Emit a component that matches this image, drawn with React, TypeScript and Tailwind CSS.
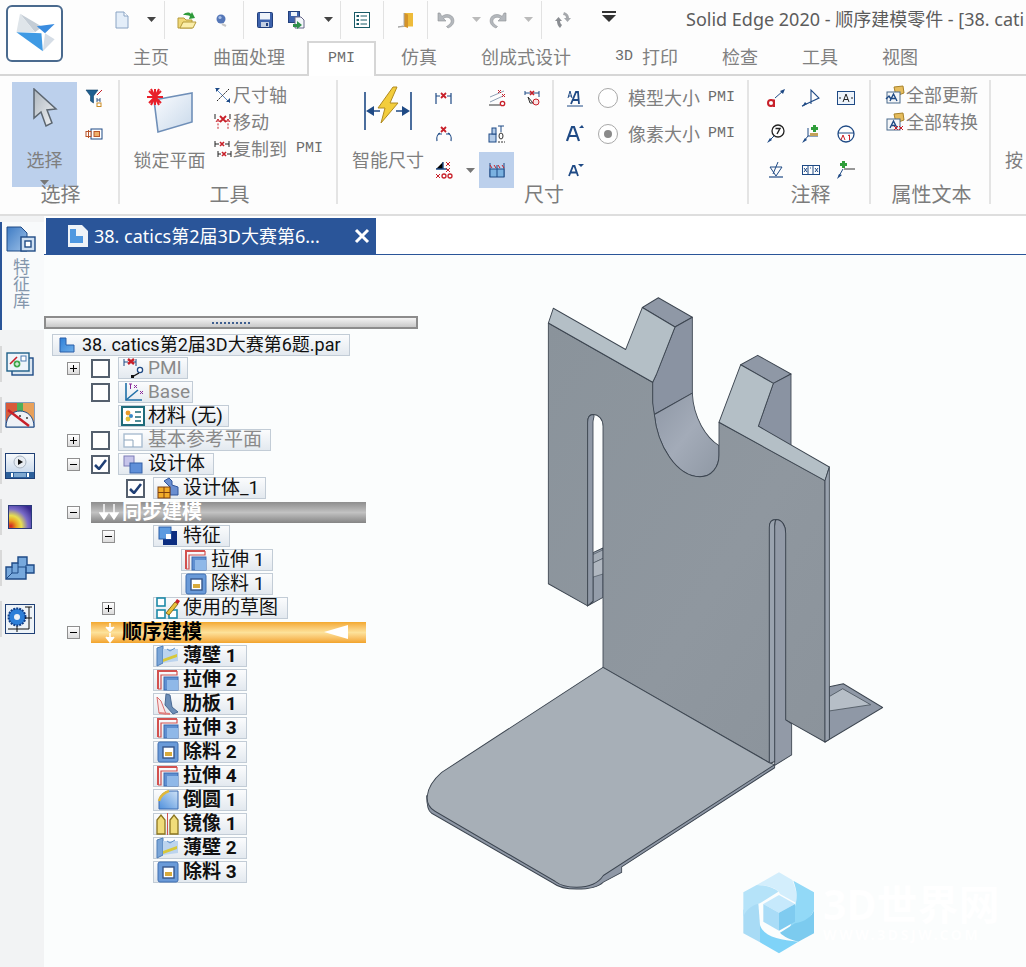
import React from "react";

type P = { children?: React.ReactNode };
const S = ({ w = 22, h = 22, vb, children, className }: { w?: number; h?: number; vb?: string; children?: React.ReactNode; className?: string }) => (
  <svg width={w} height={h} viewBox={vb ?? `0 0 ${w} ${h}`} className={"shrink-0 " + (className ?? "")}>
    {children}
  </svg>
);
const NAVY = "#1f4a85";
const RED = "#c8202a";

const Pmi = ({ className = "" }: { className?: string }) => (
  <span className={"text-[15px] font-['Liberation_Mono',monospace] text-[#6c6c6c] " + className}>PMI</span>
);

/* ---------- quick access icons ---------- */
const QNew = () => (
  <S w={14} h={18}>
    <path d="M1 1H9L13 5V17H1Z" fill="#e4eef9" stroke="#8aa4c4" />
    <path d="M9 1V5H13" fill="#fff" stroke="#8aa4c4" />
  </S>
);
const Dd = ({ c = "#444" }: { c?: string }) => (
  <S w={9} h={5}>
    <path d="M0 0H9L4.5 5Z" fill={c} />
  </S>
);
const QOpen = () => (
  <S w={20} h={20}>
    <path d="M1 8H7L9 10H15V18H1Z" fill="#f0d878" stroke="#b59a3a" />
    <path d="M3 18L6 12H19L16 18Z" fill="#fbeeaa" stroke="#b59a3a" />
    <path d="M6 5C9 2 12 2 14 4L15 2L18 8L12 9L13 6C11 5 9 5 6 5Z" fill="#2e9a3a" />
  </S>
);
const QWeb = () => (
  <S w={12} h={14}>
    <circle cx="6" cy="6" r="4.5" fill="#5577b8" />
    <circle cx="5" cy="4.5" r="1.6" fill="#a9c0e6" />
    <path d="M7 11L11 13" stroke="#c7c7c7" strokeWidth="2" />
  </S>
);
const QSave = () => (
  <S w={16} h={16}>
    <rect x="0.5" y="0.5" width="15" height="15" rx="1" fill="#3d62ac" stroke="#22407c" />
    <rect x="3" y="1" width="10" height="6.5" fill="#eef3fa" />
    <rect x="4" y="10" width="8" height="5" fill="#c4cfe2" />
    <rect x="9" y="11" width="2" height="3" fill="#22407c" />
  </S>
);
const QSaveAs = () => (
  <S w={18} h={18}>
    <rect x="0.5" y="0.5" width="11" height="11" fill="#3d62ac" stroke="#22407c" />
    <rect x="3" y="1" width="6" height="4" fill="#eef3fa" />
    <path d="M7 6H13L16 9V17H7Z" fill="#f4f7fb" stroke="#668" />
    <path d="M5 13H9V10L14 14L9 18V16H5Z" fill="#2f8f4a" />
  </S>
);
const QProps = () => (
  <S w={16} h={16}>
    <rect x="0.5" y="0.5" width="15" height="15" fill="#fff" stroke="#175a66" />
    <rect x="2.5" y="3" width="2.5" height="2" fill="#175a66" />
    <rect x="2.5" y="7" width="2.5" height="2" fill="#175a66" />
    <rect x="2.5" y="11" width="2.5" height="2" fill="#175a66" />
    <path d="M6.5 4H13M6.5 8H13M6.5 12H13" stroke="#175a66" />
  </S>
);
const QExit = () => (
  <S w={18} h={18}>
    <path d="M1 16L6 15" stroke="#9a9a9a" />
    <rect x="7" y="2" width="9" height="13.5" fill="#eebb3a" />
    <path d="M7 2L11 3.5V17L7 15.5Z" fill="#d4942a" />
    <path d="M7 2V15.5L1 16" fill="none" stroke="#aaa" />
  </S>
);
const QUndo = ({ flip = false }: { flip?: boolean }) => (
  <S w={18} h={18} className={flip ? "-scale-x-100" : ""}>
    <path d="M1 2V10H9L6.5 7.5C9 5.5 13 6 14 9C15 12 12 14 9.5 15.5L11 17C15 15.5 18 12 16.5 7.5C15 3.5 9 2 4.8 5.5L3 2Z" fill="#b4b8bd" stroke="#8f9296" strokeWidth="0.6" />
  </S>
);
const QSwap = () => (
  <S w={16} h={18}>
    <path d="M5 17C3 15 2 13 2 10L0 10L3.5 6L7 10L5 10C5 12 6 13 7 14Z" fill="#8a8d92" />
    <path d="M9 1C12 2 14 4 14 7L16 7L12.5 11L9 7L11 7C11 5 10 4 8 4Z" fill="#a5a8ac" />
  </S>
);
const QMenu = () => (
  <S w={14} h={11}>
    <rect x="0" y="0" width="14" height="2" fill="#333" />
    <path d="M0 4H14L7 11Z" fill="#333" />
  </S>
);

/* ---------- ribbon icons ---------- */
const Cursor = () => (
  <S w={26} h={44}>
    <path d="M2 1L2 30L9 24L14 38L20 35L15 22L24 21Z" fill="url(#cur)" stroke="#5c6670" strokeWidth="1.5" />
    <defs>
      <linearGradient id="cur" x1="0" y1="0" x2="1" y2="1">
        <stop offset="0" stopColor="#aeb6be" />
        <stop offset="1" stopColor="#f2f4f6" />
      </linearGradient>
    </defs>
  </S>
);
const FilterH = () => (
  <S w={18} h={18}>
    <path d="M1 1H13L8.5 7V14L5.5 12V7Z" fill="#1f5f8f" stroke="#123f66" strokeWidth="0.6" />
    <path d="M12 6L17 1" stroke={RED} />
    <path d="M12 9V13M15 9V13M12 11H15" stroke="#3a5c88" />
    <rect x="12" y="14" width="4" height="3.5" fill="#fff" stroke="#c98a22" />
  </S>
);
const SelSmall = () => (
  <S w={18} h={12}>
    <rect x="6" y="1" width="11" height="10" fill="#fff" stroke="#1f4a85" />
    <rect x="9" y="3.5" width="5.5" height="5" fill="#eeb06a" stroke="#b9552a" />
    <rect x="1" y="3.5" width="5" height="5" fill="#fff" stroke="#b9552a" />
    <path d="M3.5 2V10" stroke="#b9552a" />
  </S>
);
const Plane = () => (
  <S w={48} h={46}>
    <path d="M8 12L46 5V34L12 44Z" fill="url(#pl)" stroke="#6f8fb8" strokeWidth="1.6" />
    <defs>
      <linearGradient id="pl" x1="0" y1="0" x2="1" y2="1">
        <stop offset="0" stopColor="#fbfdff" />
        <stop offset="1" stopColor="#c8d8ea" />
      </linearGradient>
    </defs>
    <g stroke="#e8202a" strokeWidth="2">
      <path d="M9 1V17M1 9H17M3 3L15 15M15 3L3 15M5 1L13 17M13 1L5 17" />
    </g>
  </S>
);
const DimAxis = () => (
  <S w={18} h={18}>
    <path d="M1 2L16 17" stroke="#5b87c0" />
    <path d="M3 15L15 3" stroke="#222" strokeDasharray="2 1" />
    <path d="M2 2L6 2L2 6Z" fill="#1f4a85" />
    <path d="M16 16H12L16 12Z" fill="#1f4a85" />
  </S>
);
const DimMove = () => (
  <S w={18} h={18}>
    <path d="M1 1V6M16 1V6" stroke="#222" />
    <path d="M6 3L12 9M12 3L6 9" stroke={RED} strokeWidth="1.8" />
    <path d="M4 7V17M14 7V17" stroke={RED} strokeDasharray="2 1.4" />
    <path d="M2 9L4 6L6 9M12 9L14 6L16 9" fill="none" stroke={RED} />
  </S>
);
const DimCopy = () => (
  <S w={18} h={18}>
    <path d="M1 1V7M15 1V7M4 11V17M17 11V17" stroke="#222" />
    <path d="M6 2L10 6M10 2L6 6M8 12L12 16M12 12L8 16" stroke={RED} strokeWidth="1.6" />
    <path d="M1 4H5M11 4H15M4 14H7M13 14H17" stroke="#222" />
  </S>
);
const Smart = () => (
  <S w={48} h={46}>
    <path d="M1 6V44M47 6V44" stroke={NAVY} strokeWidth="1.6" />
    <path d="M2 25L10 20V30ZM46 25L38 20V30Z" fill={NAVY} />
    <path d="M10 25H16M32 25H38" stroke={NAVY} strokeWidth="1.6" />
    <path d="M29 1L14 22H21L17 37L34 17H26L33 1Z" fill="#f3cd3c" stroke="#b08a20" />
  </S>
);
const D1 = () => (
  <S w={18} h={14}>
    <path d="M1 2V13M16 2V13" stroke={NAVY} strokeWidth="1.2" />
    <path d="M1 5H5M12 5H16" stroke={NAVY} />
    <path d="M6 2L11 7M11 2L6 7" stroke={RED} strokeWidth="1.8" />
  </S>
);
const D2 = () => (
  <S w={18} h={18}>
    <path d="M2 8L16 2" stroke="#8ea0b4" />
    <path d="M2 13L15 7" stroke="#8ea0b4" />
    <path d="M1 16H12" stroke="#333" />
    <path d="M10 1L13 4M13 1L10 4M14 5L17 8M17 5L14 8" stroke={RED} />
    <circle cx="14.5" cy="14.5" r="2.2" fill="none" stroke={RED} strokeWidth="1.3" />
  </S>
);
const D3 = () => (
  <S w={18} h={16}>
    <path d="M2 15C1 11 3 8 5 7M16 15C17 11 15 8 13 7" fill="none" stroke={NAVY} strokeWidth="1.2" />
    <path d="M3 8H7M11 8H15" stroke={NAVY} />
    <path d="M6 1L11 6M11 1L6 6" stroke={RED} strokeWidth="1.8" />
  </S>
);
const D4 = () => (
  <S w={18} h={18}>
    <rect x="1" y="9" width="7" height="8" fill="#b3cbe8" stroke={NAVY} />
    <rect x="4" y="3" width="4" height="6" fill="#b3cbe8" stroke={NAVY} />
    <path d="M10 1H16M13 1V7" stroke={NAVY} />
    <ellipse cx="13" cy="11" rx="2" ry="3" fill="none" stroke="#333" />
    <path d="M10 17H17" stroke="#333" strokeDasharray="2 1" />
  </S>
);
const D5 = () => (
  <S w={18} h={16}>
    <path d="M2 1V5M16 1V7M2 3H16" stroke={NAVY} />
    <path d="M7 1L11 5M11 1L7 5" stroke={RED} strokeWidth="1.6" />
    <path d="M5 7L10 13L7 13Z" fill="#fff" stroke="#333" />
    <circle cx="13" cy="12" r="3" fill="#fbe3e3" stroke={RED} />
  </S>
);
const D6 = () => (
  <S w={18} h={18}>
    <path d="M1 8H8V1M8 8H12" stroke={NAVY} strokeWidth="1.4" />
    <path d="M11 1L15 5M15 1L11 5M11 7L15 11M15 7L11 11" stroke={RED} />
    <path d="M1 13L5 17M5 13L1 17" stroke={RED} />
    <circle cx="9" cy="15" r="2" fill="none" stroke={RED} strokeWidth="1.3" />
    <circle cx="15" cy="15" r="2" fill="none" stroke={RED} strokeWidth="1.3" />
  </S>
);
const D7 = () => (
  <S w={18} h={18}>
    <path d="M2 2V16M16 2V16" stroke={NAVY} />
    <path d="M2 4L4 7M6 4L8 7M10 4L12 7M14 4L16 7" stroke={RED} />
    <rect x="2" y="8" width="14" height="8" fill="#7ab1e0" stroke={NAVY} />
    <path d="M9 4V16" stroke={NAVY} />
  </S>
);
const Af = ({ t }: { t: number }) => (
  <S w={18} h={18}>
    {t === 0 && (
      <>
        <path d="M2 9L4 2L6 9M2.6 7H5.4" fill="none" stroke={NAVY} strokeWidth="1" />
        <path d="M5 15L10 3H12L13 15M7 11H13" fill="none" stroke={NAVY} strokeWidth="1.8" />
        <path d="M1 17H17" stroke={NAVY} />
      </>
    )}
    {t === 1 && (
      <>
        <path d="M1 17L6 3H8L13 17M3.5 12H10.5" fill="none" stroke={NAVY} strokeWidth="2.2" />
        <path d="M13 4L16 1L18 4Z" fill={NAVY} />
      </>
    )}
    {t === 2 && (
      <>
        <path d="M3 17L7 7H8.5L12 17M5 13.5H10.5" fill="none" stroke={NAVY} strokeWidth="1.8" />
        <path d="M12 5L15 8L18 5Z" fill={NAVY} />
      </>
    )}
  </S>
);
const Tip = () => <path d="M1 19L6 16L4 14Z" fill={NAVY} />;
const N1 = () => (
  <S w={20} h={20}>
    <circle cx="5" cy="15" r="3" fill="none" stroke={RED} strokeWidth="2" />
    <path d="M8 11.5V19" stroke={RED} strokeWidth="2" />
    <path d="M9 10L17 3" stroke={NAVY} />
    <path d="M19 1L14 3L17 6Z" fill={NAVY} />
  </S>
);
const N2 = () => (
  <S w={20} h={20}>
    <path d="M1 18L18 10L10 2V16" fill="none" stroke={NAVY} strokeWidth="1.1" />
    <Tip />
  </S>
);
const N3 = () => (
  <S w={18} h={14}>
    <rect x="0.5" y="0.5" width="17" height="13" fill="#eef4fb" stroke={NAVY} />
    <path d="M6 11L9 3L12 11M7 8.5H11" fill="none" stroke="#222" />
    <path d="M2 7H4M14 7H16" stroke="#222" />
  </S>
);
const N4 = () => (
  <S w={20} h={20}>
    <circle cx="12" cy="7" r="6" fill="#fff" stroke="#222" strokeWidth="1.3" />
    <path d="M9.5 4.5H14L11 10" fill="none" stroke="#222" strokeWidth="1.4" />
    <path d="M8 12L3 17" stroke={NAVY} />
    <Tip />
  </S>
);
const N5 = () => (
  <S w={20} h={20}>
    <path d="M7 4V12H17" fill="none" stroke={NAVY} />
    <path d="M9 9H17V12H9Z" fill="#c3a15a" />
    <path d="M12 1H15V3H17V6H15V8H12V6H10V3H12Z" fill="#2f9d3a" />
    <path d="M7 12L3 17" stroke={NAVY} />
    <Tip />
  </S>
);
const N6 = () => (
  <S w={18} h={18}>
    <circle cx="9" cy="9" r="8" fill="#fff" stroke={NAVY} strokeWidth="1.3" />
    <path d="M1 8H17" stroke={NAVY} />
    <path d="M4 15L6 10L8 15M11 10.5L12.5 10V15" fill="none" stroke={RED} />
  </S>
);
const N7 = () => (
  <S w={16} h={18}>
    <path d="M2 6H14L8 15ZM10 1L5 13" fill="none" stroke={NAVY} />
    <path d="M1 16H15" stroke={NAVY} strokeWidth="1.2" />
  </S>
);
const N8 = () => (
  <S w={18} h={10}>
    <rect x="0.5" y="0.5" width="17" height="9" fill="#fff" stroke={NAVY} />
    <path d="M6 1V9M11 1V9" stroke={NAVY} />
    <path d="M2 3L5 7M5 3L2 7M8 3H9M13 3L16 7M16 3L13 7" stroke={NAVY} />
  </S>
);
const N9 = () => (
  <S w={20} h={20}>
    <path d="M7 9L3 16" stroke={NAVY} />
    <path d="M8 9H19" stroke="#333" />
    <path d="M6 1H9V3H11V6H9V8H6V6H4V3H6Z" fill="#2f9d3a" />
    <path d="M1 19L6 15L3 14Z" fill={NAVY} />
  </S>
);
const PropAll = ({ x = false }: { x?: boolean }) => (
  <S w={20} h={20}>
    <path d="M9 2L18 1L19 8L11 11Z" fill="#e6bd5e" stroke="#a9832a" />
    <rect x="2" y="7" width="13" height="11" fill="#f4f6f8" stroke="#4a6a8c" />
    <path d="M5 16L8.5 9L12 16M6.5 13.5H10.5" fill="none" stroke={NAVY} strokeWidth="1.4" />
    {x ? <path d="M9 14L13 18M13 14L9 18M14 14L18 18M18 14L14 18" stroke={RED} /> : <path d="M1 14L4 11L6 14" fill="none" stroke={NAVY} strokeWidth="1.4" />}
  </S>
);

/* ---------- tree icons ---------- */
const TRoot = () => (
  <S w={16} h={16}>
    <path d="M1 1H7V8H15V15H1Z" fill="url(#rt)" stroke="#2b5fa8" />
    <defs>
      <linearGradient id="rt" x1="0" y1="0" x2="1" y2="1">
        <stop offset="0" stopColor="#2f80d8" />
        <stop offset="1" stopColor="#6eaee8" />
      </linearGradient>
    </defs>
  </S>
);
const TPmi = () => (
  <S w={22} h={22}>
    <path d="M2 2V9M14 2V9M2 5H6M11 5H14" stroke="#1f4a85" />
    <path d="M6 2L12 7M12 2L6 7" stroke={RED} strokeWidth="2.4" />
    <circle cx="18" cy="13" r="2.6" fill="#fff" stroke="#1f4a85" strokeWidth="1.3" />
    <path d="M17 16L10 20" stroke="#111" strokeWidth="1.4" />
    <rect x="9" y="18" width="3" height="3" fill="#111" />
  </S>
);
const TBase = () => (
  <S w={22} h={22}>
    <path d="M4 2V19H20" fill="none" stroke="#1f70a8" strokeWidth="1.6" />
    <path d="M4 19L16 9" stroke="#1f70a8" strokeWidth="1.6" />
    <path d="M7 3H10M8.5 3V8M12 4L15 7M15 4L12 7M18 10L21 13M21 10L18 13" stroke="#8a2a9a" />
  </S>
);
const TMat = () => (
  <S w={24} h={20}>
    <rect x="1" y="1" width="22" height="18" fill="#fff" stroke="#1d6a7a" strokeWidth="2" />
    <circle cx="7" cy="7" r="2.4" fill="#e89a2a" />
    <circle cx="7" cy="13" r="2.4" fill="#e0c13a" />
    <circle cx="10" cy="10" r="2" fill="#3a88c8" />
    <path d="M14 6H20M14 11H20M14 15H20" stroke="#1d6a7a" strokeWidth="1.6" />
  </S>
);
const TPlane = () => (
  <S w={22} h={18}>
    <rect x="2" y="3" width="18" height="13" fill="#fff" stroke="#a9bdd0" strokeWidth="1.4" />
    <path d="M2 9H11V16" fill="none" stroke="#8ea6bc" />
  </S>
);
const TBody = () => (
  <S w={20} h={20}>
    <rect x="1" y="2" width="10" height="10" fill="#c6c4ea" stroke="#7d7cb6" />
    <rect x="7" y="9" width="12" height="10" fill="#5f8fd8" stroke="#3560a8" />
  </S>
);
const TBody1 = () => (
  <S w={22} h={22}>
    <path d="M7 4L12 1L15 4V8L21 10V18H13V10Z" fill="#6a8ed0" stroke="#2f549c" />
    <rect x="1" y="10" width="12" height="11" fill="#f2ac2a" stroke="#7c3f10" />
    <path d="M7 10V21M1 15.5H13" stroke="#7c3f10" />
  </S>
);
const TFeat = () => (
  <S w={20} h={20}>
    <rect x="5" y="5" width="14" height="14" fill="#0c2d80" />
    <rect x="1" y="1" width="12" height="12" fill="#5d9be0" stroke="#2a5ea8" />
    <rect x="8" y="8" width="5" height="5" fill="#fff" />
  </S>
);
const TExtr = () => (
  <S w={22} h={22}>
    <path d="M1 20V2H20" fill="none" stroke="#d2514f" strokeWidth="2" />
    <path d="M20 2V6H4V20H1" fill="none" stroke="#d2514f" strokeWidth="1.2" />
    <rect x="7" y="8" width="14" height="13" fill="#5f8fd0" stroke="#3a6ab0" />
    <rect x="10" y="11" width="11" height="10" fill="#8fb8e8" />
  </S>
);
const TCut = () => (
  <S w={22} h={22}>
    <rect x="1" y="1" width="20" height="20" rx="2" fill="#6a9ad8" stroke="#3f6eb0" />
    <rect x="6" y="6" width="11" height="11" fill="#fff" stroke="#37568a" strokeWidth="1.4" />
    <rect x="8" y="11" width="7" height="4" fill="#d8a93a" />
  </S>
);
const TSketch = () => (
  <S w={24} h={22}>
    <rect x="1" y="1" width="8" height="8" fill="#fff" stroke="#1d8aa8" strokeWidth="1.6" />
    <rect x="1" y="13" width="8" height="8" fill="#fff" stroke="#1d8aa8" strokeWidth="1.6" />
    <rect x="13" y="13" width="8" height="8" fill="#fff" stroke="#1d8aa8" strokeWidth="1.6" />
    <path d="M10 16L19 5L22 7L13 18Z" fill="#e9c13a" stroke="#8a6a1a" />
    <path d="M19 5L21 2L24 4L22 7Z" fill={RED} />
  </S>
);
const TThin = () => (
  <S w={24} h={22}>
    <path d="M1 3L7 1L7 18L1 21Z" fill="#7ba6d8" stroke="#4f7fb8" />
    <path d="M7 4H22V16L7 18Z" fill="#bcd4ee" />
    <path d="M7 14L21 9V12L7 17Z" fill="#d8c83a" />
    <path d="M11 4L14 6L19 3" fill="none" stroke="#5f8fc8" />
  </S>
);
const TRib = () => (
  <S w={24} h={22}>
    <path d="M1 4L3 20L10 21L5 8Z" fill="#fbe6e6" stroke="#d87070" />
    <path d="M10 1L14 2L16 14L22 19L17 21L9 12Z" fill="#6d8fb8" stroke="#4a6a94" />
    <path d="M3 20L14 21" stroke="#e08080" strokeWidth="2" />
  </S>
);
const TRound = () => (
  <S w={22} h={22}>
    <path d="M2 20V11C3 6 8 2 13 2H21V20Z" fill="url(#rd)" stroke="#3a6ab0" />
    <path d="M2 12C3 7 8 3 12 2" fill="none" stroke="#e0b83a" strokeWidth="2.4" />
    <defs>
      <linearGradient id="rd" x1="0" y1="1" x2="1" y2="0">
        <stop offset="0" stopColor="#4f90dc" />
        <stop offset="1" stopColor="#cfe2f6" />
      </linearGradient>
    </defs>
  </S>
);
const TMirror = () => (
  <S w={24} h={22}>
    <path d="M1 21V7L5 2L9 7V21Z" fill="#f0dc7a" stroke="#8a7420" strokeWidth="1.3" />
    <path d="M14 21V7L18 2L22 7V21Z" fill="#f0dc7a" stroke="#8a7420" strokeWidth="1.3" />
    <path d="M11.5 0V22" stroke="#d2514f" />
  </S>
);

/* ---------- sidebar icons ---------- */
const SideFeat = () => (
  <S w={30} h={26}>
    <path d="M1 1H15L21 7V25H1Z" fill="url(#sf)" stroke="#1f4a85" />
    <defs>
      <linearGradient id="sf" x1="0" y1="0" x2="1" y2="1">
        <stop offset="0" stopColor="#3f7cc4" />
        <stop offset="1" stopColor="#9cc0e8" />
      </linearGradient>
    </defs>
    <rect x="15" y="11" width="14" height="14" fill="#cfe0f2" stroke="#1f4a85" strokeWidth="1.4" />
    <rect x="19" y="15" width="6" height="6" fill="#fff" stroke="#1f4a85" strokeWidth="1.4" />
  </S>
);
const Side1 = () => (
  <S w={28} h={24}>
    <rect x="6" y="6" width="21" height="17" fill="#dce6f0" stroke="#1f4a85" strokeWidth="1.4" />
    <rect x="1" y="1" width="22" height="18" fill="#eef4fa" stroke="#1f5f88" strokeWidth="1.4" />
    <path d="M4 12L11 5" stroke={RED} strokeWidth="1.6" />
    <circle cx="11" cy="12" r="3.4" fill="#3fa64a" />
    <path d="M9 12H13M11 10V14" stroke="#fff" />
    <rect x="15" y="4" width="5" height="5" fill="#fff" stroke="#4a7ab0" />
  </S>
);
const Side2 = () => (
  <S w={30} h={26}>
    <rect x="1" y="1" width="28" height="24" fill="#fff" stroke="#1f4a85" />
    <path d="M1 1H7V16L1 20ZM7 1H12V10L7 14Z" fill="#d85a3a" />
    <path d="M12 1H18V10L12 10Z" fill="#4fae5a" />
    <path d="M18 1H23V14L18 10ZM23 1H29V20L23 14Z" fill="#e8a05a" />
    <path d="M1 25C1 14 8 9 15 9C22 9 29 14 29 25Z" fill="#eef1f6" stroke="#1f4a85" />
    <path d="M3 8L24 24" stroke={RED} strokeWidth="2.4" />
    <circle cx="15" cy="14" r="0.9" fill="#222" />
    <circle cx="22" cy="16" r="0.9" fill="#222" />
  </S>
);
const Side3 = () => (
  <S w={30} h={26}>
    <rect x="0.5" y="0.5" width="29" height="25" fill="url(#s3)" stroke="#1f3f75" />
    <defs>
      <linearGradient id="s3" x1="0" y1="0" x2="0" y2="1">
        <stop offset="0" stopColor="#f8fafc" />
        <stop offset="1" stopColor="#bcd0e8" />
      </linearGradient>
    </defs>
    <circle cx="15" cy="9" r="6" fill="#e8edf3" stroke="#a8b4c2" />
    <path d="M13 6L18 9L13 12Z" fill="#111" />
    <rect x="1" y="19" width="28" height="6" fill="#2c5f9a" />
    <rect x="6" y="20" width="2" height="4" fill="#fff" />
    <rect x="22" y="20" width="2" height="4" fill="#fff" />
    <rect x="9" y="20" width="12" height="4" fill="#7fa8d0" />
  </S>
);
const Side4 = () => (
  <S w={24} h={24}>
    <defs>
      <radialGradient id="s4" cx="0.1" cy="0.9" r="1.1">
        <stop offset="0" stopColor="#d02020" />
        <stop offset="0.22" stopColor="#e8a020" />
        <stop offset="0.42" stopColor="#e8e050" />
        <stop offset="0.68" stopColor="#7a6cc8" />
        <stop offset="1" stopColor="#3a2a90" />
      </radialGradient>
    </defs>
    <rect x="0.5" y="0.5" width="23" height="23" fill="url(#s4)" stroke="#2a3a7a" />
  </S>
);
const Side5 = () => (
  <S w={30} h={24}>
    <path d="M1 11H7V7H13V1H22V9H29V17H21V23H1Z" fill="#77a8dc" stroke="#1f4a85" strokeWidth="1.4" />
    <path d="M7 11V17H13V7M13 11H21V17M7 17L1 23M21 9V17" fill="none" stroke="#1f4a85" />
  </S>
);
const Side6 = () => (
  <S w={30} h={30}>
    <rect x="0.5" y="0.5" width="29" height="29" fill="#eef3f8" stroke="#1f3f75" />
    <circle cx="12" cy="13" r="8.5" fill="#2d7fd8" stroke="#123f88" strokeDasharray="2 1" strokeWidth="2" />
    <circle cx="12" cy="13" r="3" fill="#eef3f8" />
    <path d="M3 25H24M12 22V28M24 3V25M20 3H27M20 14H27" stroke="#111" />
  </S>
);

/* ---------- small controls ---------- */
const Rib = ({ children, className = "" }: P & { className?: string }) => (
  <div className={"flex items-center justify-center " + className}>{children}</div>
);
const GroupLabel = ({ children }: P) => (
  <div className="shrink-0 pl-[3px] text-center text-[20px] leading-[19px] text-[#7c7c7c]">{children}</div>
);
const Exp = ({ minus = false, className = "" }: { minus?: boolean; className?: string }) => (
  <span className={"relative flex h-[13px] w-[13px] shrink-0 items-center justify-center border border-[#8f8f8f] bg-gradient-to-b from-white to-[#dcdcdc] " + className}>
    <span className="h-px w-[7px] bg-black" />
    {!minus && <span className="absolute h-[7px] w-px bg-black" />}
  </span>
);
const Check = ({ on = false, className = "" }: { on?: boolean; className?: string }) => (
  <span className={"flex h-[19px] w-[19px] shrink-0 items-center justify-center border-2 border-[#55606e] bg-white " + className}>
    {on && (
      <S w={13} h={11}>
        <path d="M1 6L5 10L12 1" fill="none" stroke="#1f3f75" strokeWidth="2.6" />
      </S>
    )}
  </span>
);
const Box = ({
  className = "",
  icon,
  text,
  dim = false,
  bold = false,
  small = false,
}: {
  className?: string;
  icon: React.ReactNode;
  text: string;
  dim?: boolean;
  bold?: boolean;
  small?: boolean;
}) => (
  <div
    className={
      "flex h-[22px] shrink-0 items-center border border-[#c2ccd6] bg-gradient-to-b from-[#fbfcfd] to-[#e3e9ef] font-['Roboto','Noto_Sans_CJK_SC',sans-serif] leading-[20px] whitespace-nowrap " +
      (small ? "text-[18px] " : "text-[19px] ") +
      (dim ? "text-[#8a8a8a] " : "text-[#111] ") +
      (bold ? "font-bold " : "") +
      className
    }
  >
    <span className="ml-px flex w-[25px] shrink-0 items-center justify-center">{icon}</span>
    <span className="ml-[3px]">{text}</span>
  </div>
);
const Row = ({ children }: P) => <div className="flex h-[24px] items-center">{children}</div>;

const boldRows: [React.ReactNode, string][] = [
  [<TThin />, "薄壁 1"],
  [<TExtr />, "拉伸 2"],
  [<TRib />, "肋板 1"],
  [<TExtr />, "拉伸 3"],
  [<TCut />, "除料 2"],
  [<TExtr />, "拉伸 4"],
  [<TRound />, "倒圆 1"],
  [<TMirror />, "镜像 1"],
  [<TThin />, "薄壁 2"],
  [<TCut />, "除料 3"],
];

const Tree = () => (
  <div className="flex flex-col">
    <div className="ml-[8px] flex h-[22px] items-center">
      <Box small className="w-[298px]" icon={<TRoot />} text="38. catics第2届3D大赛第6题.par" />
    </div>
    <Row>
      <Exp className="ml-[23px]" />
      <Check className="ml-[11px]" />
      <Box className="ml-[8px] w-[70px]" icon={<TPmi />} text="PMI" dim />
    </Row>
    <Row>
      <Check className="ml-[47px]" />
      <Box className="ml-[8px] w-[75px]" icon={<TBase />} text="Base" dim />
    </Row>
    <Row>
      <Box className="ml-[74px] w-[111px]" icon={<TMat />} text="材料 (无)" />
    </Row>
    <Row>
      <Exp className="ml-[23px]" />
      <Check className="ml-[11px]" />
      <Box className="ml-[8px] w-[153px]" icon={<TPlane />} text="基本参考平面" dim />
    </Row>
    <Row>
      <Exp minus className="ml-[23px]" />
      <Check on className="ml-[11px]" />
      <Box className="ml-[8px] w-[96px]" icon={<TBody />} text="设计体" />
    </Row>
    <Row>
      <Check on className="ml-[82px]" />
      <Box className="ml-[8px] w-[113px]" icon={<TBody1 />} text="设计体_1" />
    </Row>
    <Row>
      <Exp minus className="ml-[23px]" />
      <div className="ml-[11px] flex h-[21px] w-[275px] items-center bg-gradient-to-b from-[#8e8e8e] via-[#c2c2c2] to-[#858585] text-[20px] text-white">
        <S w={22} h={18} className="ml-[8px]">
          <path d="M5 1V11M1 10L5 16L9 10ZM15 1V11M11 10L15 16L19 10Z" fill="#fff" stroke="#fff" strokeWidth="1.4" />
        </S>
        <span className="ml-px font-bold">同步建模</span>
      </div>
    </Row>
    <Row>
      <Exp minus className="ml-[58px]" />
      <Box className="ml-[38px] w-[77px]" icon={<TFeat />} text="特征" />
    </Row>
    <Row>
      <Box className="ml-[137px] w-[92px]" icon={<TExtr />} text="拉伸 1" />
    </Row>
    <Row>
      <Box className="ml-[137px] w-[92px]" icon={<TCut />} text="除料 1" />
    </Row>
    <Row>
      <Exp className="ml-[58px]" />
      <Box className="ml-[38px] w-[135px]" icon={<TSketch />} text="使用的草图" />
    </Row>
    <Row>
      <Exp minus className="ml-[23px]" />
      <div className="ml-[11px] flex h-[21px] w-[275px] items-center bg-gradient-to-b from-[#f3a92c] via-[#fde29a] to-[#f2a428] text-[20px] text-black">
        <S w={14} h={21} className="ml-[12px]">
          <path d="M7 1V8M3 5L7 9L11 5M7 11V19M3 15L7 20L11 15" fill="#fff" stroke="#fff" strokeWidth="1.6" />
        </S>
        <span className="ml-[5px] font-bold">顺序建模</span>
        <S w={26} h={16} className="ml-[122px]">
          <path d="M0 8L24 1V15Z" fill="#fff" />
        </S>
      </div>
    </Row>
    {boldRows.map(([icon, text]) => (
      <Row key={text}>
        <Box className="ml-[109px] w-[94px]" icon={icon} text={text} bold />
      </Row>
    ))}
  </div>
);

const Model = () => (
  <svg width={480} height={610} viewBox="0 0 1440 1568" preserveAspectRatio="none" className="absolute left-[376px] top-[35px]">
    <defs>
      <linearGradient id="cyl" x1="0" y1="0" x2="1" y2="1">
        <stop offset="0" stopColor="#8e97a5" />
        <stop offset="0.5" stopColor="#a3abb8" />
        <stop offset="1" stopColor="#8f98a4" />
      </linearGradient>
      <linearGradient id="face" x1="0" y1="0" x2="1" y2="1">
        <stop offset="0" stopColor="#8a939b" />
        <stop offset="0.6" stopColor="#8f979f" />
        <stop offset="1" stopColor="#8b939b" />
      </linearGradient>
    </defs>
    <g stroke="#3c4550" strokeWidth="2.6" strokeLinejoin="round">
      {/* far spike */}
      <path d="M1228 1020L1270 1012L1388 1073L1215 1162L1228 1150Z" fill="#8f98a6" />
      <path d="M1228 1045L1268 1025L1352 1066L1228 1082Z" fill="#b6bec7" strokeWidth="2" />
      {/* left slot lower piece */}
      <path d="M503 812L549 790V663L519 675V800Z" fill="#949daa" />
      <path d="M519 680L549 668V690L519 702Z" fill="#a4acb6" strokeWidth="1.6" />
      <path d="M519 702L549 690V730L519 738Z" fill="#b0b7c0" strokeWidth="1.6" />
      {/* tabs */}
      <path d="M667 45L715 20L817 70L765 95Z" fill="#8f98a6" />
      <path d="M698 300L698 237L710 215L765 95L817 70V265L703 320Z" fill="#8a93a2" />
      <path d="M703 320L817 265C820 330 860 380 897 400V425C897 455 875 480 840 480C770 480 712 400 703 320Z" fill="url(#cyl)" />
      <path d="M962 192L1013 168L1113 216L1060 240Z" fill="#8f98a6" />
      <path d="M1060 240L1113 216V405L1015 350Z" fill="#8a93a2" />
      {/* main face */}
      <path
        d="M385 85L698 237V290L703 320C712 400 770 480 840 480C875 480 897 455 897 425V340L1215 490V1162L1097 1105V625C1097 605 1085 590 1068 590C1055 590 1048 597 1048 610V1215L549 970V350C549 332 535 320 520 320C508 320 503 327 503 340V812L385 755Z"
        fill="url(#face)"
      />
      {/* top chamfer */}
      <path d="M385 85L400 47L617 153L667 45L765 95L710 215L698 237Z" fill="#b4bfc6" />
      <path d="M897 340L962 192L1060 240L1015 350L1228 455L1215 490Z" fill="#b4bfc6" />
      {/* right edge */}
      <path d="M1215 490L1228 455V1155L1215 1162Z" fill="#98a1ad" />
      {/* slots */}
      <path d="M503 340C503 327 510 320 520 320C526 322 519 330 519 340V800L503 812Z" fill="#8f98a6" />
      <path d="M1064 615C1064 603 1066 592 1068 590C1085 590 1097 605 1097 625V1105L1115 1115V1195L1064 1222Z" fill="#929aa7" />
      <path d="M1048 610C1048 597 1055 590 1068 590C1062 596 1064 605 1064 615V1212L1048 1218Z" fill="#9aa3af" />
      {/* floor lip */}
      <path d="M1064 1220V1228L605 1483V1497L550 1522C535 1535 510 1540 470 1540C440 1540 415 1535 400 1525L35 1345C25 1340 20 1325 20 1300L60 1300L550 1400Z" fill="#8f98a6" />
      {/* floor */}
      <path d="M549 970L1048 1215L1064 1220L550 1505C535 1525 510 1535 470 1535C440 1535 420 1530 405 1520L45 1340C25 1330 20 1315 22 1300C25 1275 45 1255 65 1240Z" fill="#a7afb7" />
    </g>
  </svg>
);

const Watermark = () => (
  <div className="absolute left-[686px] top-[605px] flex h-[107px] w-[296px] items-start">
    <S w={96} h={107} vb="0 0 288 321">
      <path d="M147 37L80 75C120 75 145 88 150 102L200 130C205 110 195 80 187 60Z" fill="#d3eefc" />
      <path d="M190 62L252 97V150C240 180 210 200 180 205L197 130C205 110 197 80 190 62Z" fill="#92d9f7" />
      <path d="M252 150V220L205 245C185 240 160 230 150 218L195 190C225 185 245 170 252 150Z" fill="#7ccbef" />
      <path d="M90 195C100 230 150 240 205 245L147 280L90 247Z" fill="#7fd3f8" />
      <path d="M40 150V220L90 247V195L85 130C60 135 48 140 40 150Z" fill="#a8dbf5" />
      <path d="M40 97L80 75C110 75 135 85 145 95L90 130C70 135 50 145 40 170Z" fill="#b5e3f9" />
      <path d="M147 105L195 132L147 158L100 132Z" fill="#c6e9fc" />
      <path d="M100 132L147 158V212L100 185Z" fill="#a9dcf7" />
      <path d="M195 132L147 158V212L195 185Z" fill="#7fcbf0" />
    </S>
    <div className="-ml-[3px] mt-[25px] flex w-[180px] flex-col text-white">
      <span className="text-[41px] font-bold leading-[38px] whitespace-nowrap">3D世界网</span>
      <span className="mt-[5px] text-[14px] font-bold leading-[14px] tracking-[2.6px] whitespace-nowrap">WWW.3DSJW.COM</span>
    </div>
  </div>
);

const Tab = ({ children, active = false }: P & { active?: boolean }) => (
  <div
    className={
      "flex items-center text-[18px] whitespace-nowrap " +
      (active ? "-mb-[2px] mr-[3px] h-[35px] border-x-2 border-t-2 border-[#d6d6d6] bg-white px-[19px] text-[#7a7a7a]" : "h-[33px] px-[22px] text-[#808080]")
    }
  >
    {children}
  </div>
);

const Sep = ({ className = "" }: { className?: string }) => <div className={"h-[38px] w-px shrink-0 bg-[#e2e2e2] " + className} />;

export default function App() {
  return (
    <div className="flex h-[967px] w-[1026px] flex-col overflow-hidden bg-[#fbfdfd] font-['Noto_Sans','Noto_Sans_CJK_SC',sans-serif]">
      {/* title + tabs */}
      <header className="flex h-[76px] shrink-0 border-b-2 border-[#d6d6d6] bg-[#fdfdfd]">
        <div className="ml-[6px] mt-[5px] flex h-[57px] w-[57px] shrink-0 items-center justify-center rounded-[6px] border-2 border-[#4a6a8e] bg-white">
          <S w={50} h={50} vb="30 30 140 140">
            <path d="M58 43L120 80L100 95Z" fill="#c4cdd6" />
            <path d="M58 43L100 95L48 95Z" fill="#dfe5ea" />
            <path d="M122 148L155 115L128 98Z" fill="#d5dde6" />
            <path d="M48 95L118 98L122 148Z" fill="#3f9ae4" />
            <path d="M105 78L155 72L128 98Z" fill="#3a8ce0" />
          </S>
        </div>
        <div className="ml-[44px] flex min-w-0 flex-1 flex-col">
          <div className="flex h-[41px] shrink-0 items-center overflow-hidden pb-[2px] pl-[8px]">
            <QNew />
            <span className="ml-[18px]"><Dd /></span>
            <Sep className="ml-[8px]" />
            <span className="ml-[12px]"><QOpen /></span>
            <span className="ml-[18px]"><QWeb /></span>
            <Sep className="ml-[16px]" />
            <span className="ml-[13px]"><QSave /></span>
            <span className="ml-[15px]"><QSaveAs /></span>
            <span className="ml-[18px]"><Dd /></span>
            <Sep className="ml-[7px]" />
            <span className="ml-[13px]"><QProps /></span>
            <Sep className="ml-[13px]" />
            <span className="ml-[13px]"><QExit /></span>
            <Sep className="ml-[12px]" />
            <span className="ml-[9px]"><QUndo /></span>
            <span className="ml-[17px]"><Dd c="#bbb" /></span>
            <span className="ml-[8px]"><QUndo flip /></span>
            <span className="ml-[17px]"><Dd c="#bbb" /></span>
            <Sep className="ml-[8px]" />
            <span className="ml-[13px]"><QSwap /></span>
            <span className="ml-[31px] -mt-[6px]"><QMenu /></span>
            <span className="ml-[70px] text-[18px] whitespace-nowrap text-[#5c5c5c]">Solid Edge 2020 - 顺序建模零件 - [38. cati</span>
          </div>
          <nav className="ml-[4px] flex items-end">
            <Tab>主页</Tab>
            <Tab>曲面处理</Tab>
            <Tab active><Pmi /></Tab>
            <Tab>仿真</Tab>
            <Tab>创成式设计</Tab>
            <Tab><span className="text-[15px] font-['Liberation_Mono',monospace] text-[#6c6c6c]">3D</span><span className="ml-[9px]">打印</span></Tab>
            <Tab>检查</Tab>
            <Tab>工具</Tab>
            <Tab>视图</Tab>
          </nav>
        </div>
      </header>

      {/* ribbon */}
      <section className="flex h-[140px] shrink-0 items-start border-b-2 border-[#dedede] bg-[#fdfdfd] pt-[4px] text-[18px] leading-[22px] text-[#7f7f7f]">
        {/* 选择 */}
        <div className="flex h-[124px] w-[120px] shrink-0 flex-col border-r-2 border-[#e4e4e4]">
          <div className="flex h-[105px] shrink-0">
            <div className="ml-[12px] mt-[2px] flex h-[105px] w-[65px] flex-col items-center bg-[#bcd0ec]">
              <div className="mt-[6px]"><Cursor /></div>
              <span className="mt-[17px]">选择</span>
              <span className="mt-[9px]"><Dd c="#777" /></span>
            </div>
            <div className="flex w-[34px] flex-col">
              <Rib className="h-[36px]"><FilterH /></Rib>
              <Rib className="h-[36px]"><SelSmall /></Rib>
            </div>
          </div>
          <GroupLabel>选择</GroupLabel>
        </div>
        {/* 工具 */}
        <div className="flex h-[124px] w-[218px] shrink-0 flex-col border-r-2 border-[#e4e4e4]">
          <div className="flex h-[105px] shrink-0">
            <div className="ml-[14px] flex w-[71px] flex-col items-center">
              <div className="mt-[8px] h-[46px]"><Plane /></div>
              <span className="mt-[15px] whitespace-nowrap">锁定平面</span>
            </div>
            <div className="ml-[9px] flex flex-col pt-[1px]">
              <div className="flex h-[27px] items-center"><DimAxis /><span className="ml-[1px]">尺寸轴</span></div>
              <div className="flex h-[27px] items-center"><DimMove /><span className="ml-[1px]">移动</span></div>
              <div className="flex h-[27px] items-center whitespace-nowrap"><DimCopy /><span className="ml-[1px]">复制到</span><Pmi className="ml-[9px]" /></div>
            </div>
          </div>
          <GroupLabel>工具</GroupLabel>
        </div>
        {/* 尺寸 */}
        <div className="flex h-[124px] w-[411px] shrink-0 flex-col border-r-2 border-[#e4e4e4]">
          <div className="flex h-[105px] shrink-0">
            <div className="ml-[14px] flex w-[72px] flex-col items-center">
              <div className="mt-[6px] h-[46px]"><Smart /></div>
              <span className="mt-[17px] whitespace-nowrap">智能尺寸</span>
            </div>
            <div className="ml-[2px] grid grid-cols-[36px_17px_35px_35px] grid-rows-[36px_36px_36px]">
              <Rib><D1 /></Rib><div /><Rib><D2 /></Rib><Rib><D5 /></Rib>
              <Rib><D3 /></Rib><div /><Rib><D4 /></Rib><div />
              <Rib><D6 /></Rib><Rib><Dd c="#777" /></Rib><Rib className="bg-[#bcd0ec]"><D7 /></Rib><div />
            </div>
            <div className="ml-[3px] h-[100px] w-[2px] shrink-0 bg-[#e4e4e4]" />
            <div className="ml-[3px] flex w-[36px] flex-col">
              <Rib className="h-[36px]"><Af t={0} /></Rib>
              <Rib className="h-[36px]"><Af t={1} /></Rib>
              <Rib className="h-[36px]"><Af t={2} /></Rib>
            </div>
            <div className="ml-[5px] flex flex-col">
              <div className="flex h-[36px] items-center whitespace-nowrap">
                <span className="h-[20px] w-[20px] rounded-full border border-[#a8a8a8] bg-white" />
                <span className="ml-[10px]">模型大小</span><Pmi className="ml-[8px]" />
              </div>
              <div className="flex h-[36px] items-center whitespace-nowrap">
                <span className="flex h-[20px] w-[20px] items-center justify-center rounded-full border border-[#a8a8a8] bg-white">
                  <span className="h-[8px] w-[8px] rounded-full bg-[#8a8a8a]" />
                </span>
                <span className="ml-[10px]">像素大小</span><Pmi className="ml-[8px]" />
              </div>
            </div>
          </div>
          <GroupLabel>尺寸</GroupLabel>
        </div>
        {/* 注释 */}
        <div className="flex h-[124px] w-[122px] shrink-0 flex-col border-r-2 border-[#e4e4e4]">
          <div className="ml-[9px] grid h-[105px] shrink-0 grid-cols-[35px_35px_35px] grid-rows-[36px_36px_36px]">
            <Rib><N1 /></Rib><Rib><N2 /></Rib><Rib><N3 /></Rib>
            <Rib><N4 /></Rib><Rib><N5 /></Rib><Rib><N6 /></Rib>
            <Rib><N7 /></Rib><Rib><N8 /></Rib><Rib><N9 /></Rib>
          </div>
          <GroupLabel>注释</GroupLabel>
        </div>
        {/* 属性文本 */}
        <div className="flex h-[124px] w-[120px] shrink-0 flex-col border-r-2 border-[#e4e4e4]">
          <div className="ml-[14px] flex h-[105px] shrink-0 flex-col pt-[1px]">
            <div className="flex h-[27px] items-center"><PropAll /><span className="ml-[1px]">全部更新</span></div>
            <div className="flex h-[27px] items-center"><PropAll x /><span className="ml-[1px]">全部转换</span></div>
          </div>
          <GroupLabel>属性文本</GroupLabel>
        </div>
        <div className="ml-[14px] mt-[69px]">按</div>
      </section>

      {/* body */}
      <main className="flex min-h-0 flex-1">
        <aside className="flex w-[44px] shrink-0 flex-col bg-[#f2f3f4] pt-[6px]">
          <div className="flex h-[108px] flex-col items-center border-l-2 border-[#2a5599] bg-[#f8fafb]">
            <div className="mt-[4px] -ml-[4px]"><SideFeat /></div>
            <div className="mt-[6px] -ml-[6px] text-[17px] leading-[18px] text-[#8496ac] [writing-mode:vertical-rl]">特征库</div>
          </div>
          <div className="mt-[8px] flex flex-col">
            {[<Side1 />, <Side2 />, <Side3 />, <Side4 />, <Side5 />, <Side6 />].map((ic, i) => (
              <div key={i} className="flex h-[51px] items-center">
                <span className="h-[36px] w-[2px] shrink-0 bg-[#d9d9d9]" />
                <span className="flex w-[36px] justify-center">{ic}</span>
              </div>
            ))}
          </div>
        </aside>
        <div className="flex min-w-0 flex-1 flex-col">
          <div className="flex h-[39px] shrink-0 items-end border-b border-[#2a5599] bg-white pl-[2px]">
            <div className="flex h-[36px] w-[330px] items-center bg-[#2a5599] text-[18px] whitespace-nowrap text-white">
              <S w={22} h={24} className="ml-[21px]">
                <path d="M1 1H15L21 7V23H1Z" fill="#eef3f8" />
                <path d="M3 5H9V12H16V19H3Z" fill="#4f98e0" />
              </S>
              <span className="ml-[5px] w-[257px]">38. catics第2届3D大赛第6...</span>
              <S w={16} h={16} className="ml-[3px]">
                <path d="M2 2L14 14M14 2L2 14" stroke="#fff" strokeWidth="3" />
              </S>
            </div>
          </div>
          <div className="relative min-h-0 flex-1 bg-[#fbfdfd]">
            <Model />
            <Watermark />
            <div className="relative mt-[61px] flex h-[13px] w-[374px] items-center justify-center border-2 border-[#8c8c8c] bg-gradient-to-b from-[#f4f4f4] to-[#c9c9c9]">
              <span className="h-[2px] w-[38px] border-t-2 border-dotted border-[#3f5f8f]" />
            </div>
            <div className="relative mt-[5px]">
              <Tree />
            </div>
          </div>
        </div>
      </main>
    </div>
  );
}
